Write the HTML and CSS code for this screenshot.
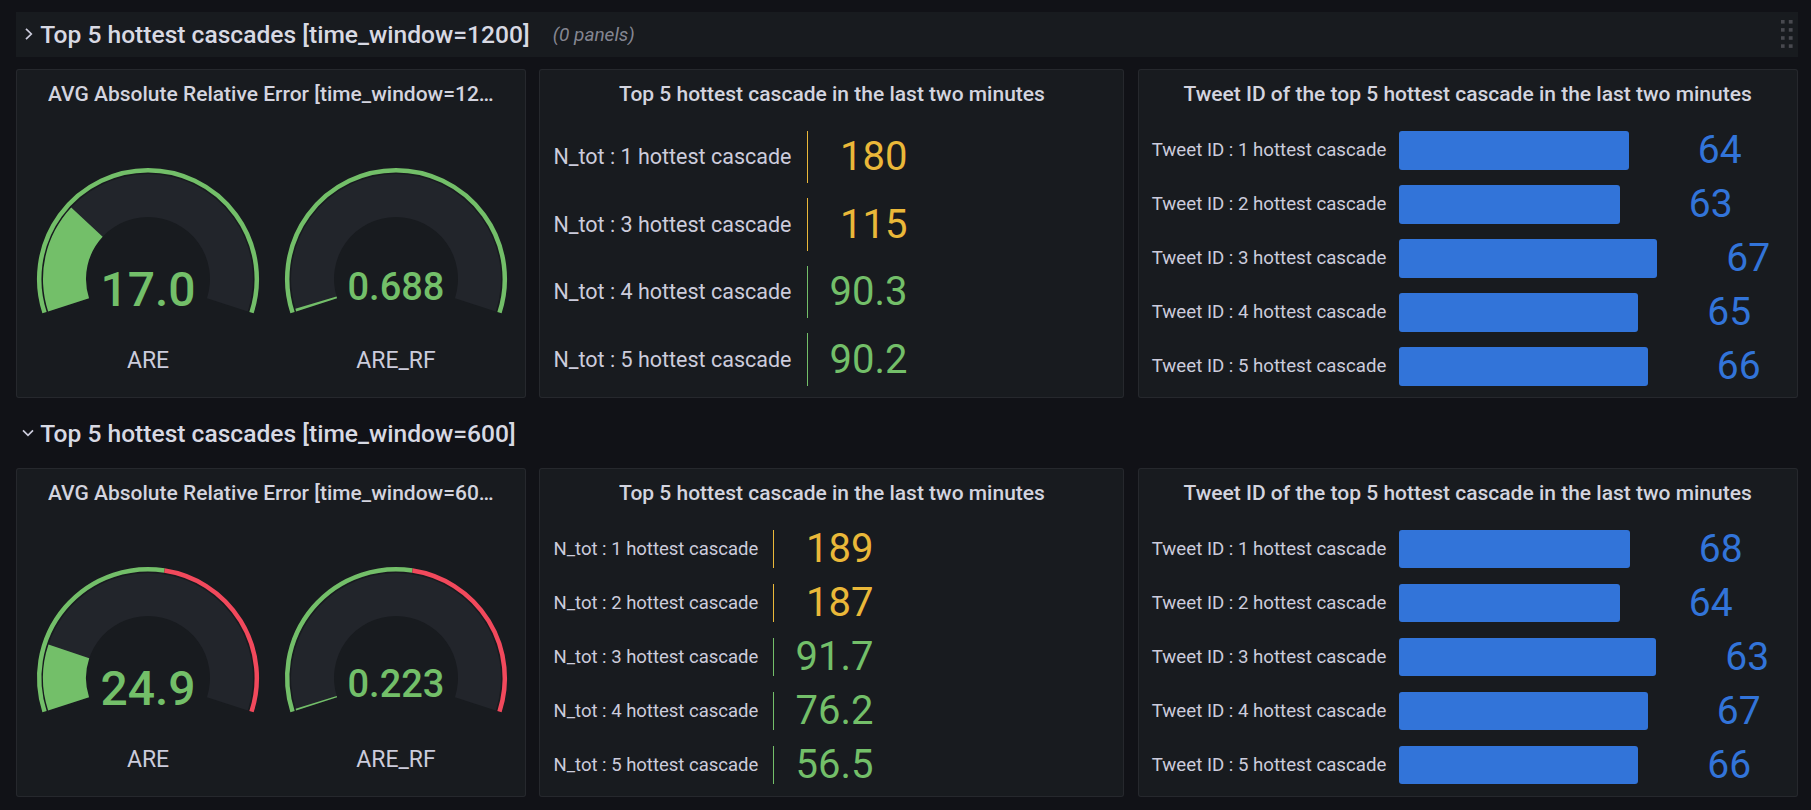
FILE: index.html
```html
<!DOCTYPE html>
<html>
<head>
<meta charset="utf-8">
<link rel="stylesheet" href="styles.css">
</head>
<body>
<div class="dashboard">

  <div class="row-header collapsed">
    <svg class="chev" width="14" height="14" viewBox="0 0 14 14"><polyline points="5,1.8 10.3,7 5,12.2" fill="none" stroke="#ccccdc" stroke-width="1.7"/></svg>
    <span class="row-title">Top 5 hottest cascades [time_window=1200]</span>
    <span class="row-count">(0 panels)</span>
    <svg class="drag" width="12" height="28" viewBox="0 0 12 28">
      <rect x="0" y="0" width="3.6" height="3.6"/><rect x="7.8" y="0" width="3.8" height="3.6"/>
      <rect x="0" y="8.1" width="3.6" height="3.6"/><rect x="7.8" y="8.1" width="3.8" height="3.6"/>
      <rect x="0" y="16.2" width="3.6" height="3.6"/><rect x="7.8" y="16.2" width="3.8" height="3.6"/>
      <rect x="0" y="24.3" width="3.6" height="3.6"/><rect x="7.8" y="24.3" width="3.8" height="3.6"/>
    </svg>
  </div>

  <div class="panel-grid">
    <section class="panel span7">
      <header class="panel-header"><span class="panel-title">AVG Absolute Relative Error [time_window=1200]</span></header>
      <div class="gauge-body">
        <div class="gauge-cell">
          <svg class="gauge" width="248" height="200" viewBox="0 0 248 200">
            <path class="band" d="M24.13 188.45 A105 105 0 1 1 223.87 188.45 L182.97 175.16 A62 62 0 1 0 65.03 175.16 Z"/>
            <path class="fill-green" d="M24.13 188.45 A105 105 0 0 1 47.21 84.39 L78.65 113.72 A62 62 0 0 0 65.03 175.16 Z"/>
            <path class="thr-green" d="M20.52 189.62 A108.8 108.8 0 1 1 227.48 189.62"/>
            <text class="gval big" x="124" y="183.4">17.0</text>
          </svg>
          <div class="gauge-label">ARE</div>
        </div>
        <div class="gauge-cell">
          <svg class="gauge" width="248" height="200" viewBox="0 0 248 200">
            <path class="band" d="M24.13 188.45 A105 105 0 1 1 223.87 188.45 L182.97 175.16 A62 62 0 1 0 65.03 175.16 Z"/>
            <path class="fill-green" d="M24.13 188.45 A105 105 0 0 1 23.33 185.82 L64.55 173.61 A62 62 0 0 0 65.03 175.16 Z"/>
            <path class="thr-green" d="M20.52 189.62 A108.8 108.8 0 1 1 227.48 189.62"/>
            <text class="gval small" x="124" y="176.5">0.688</text>
          </svg>
          <div class="gauge-label">ARE_RF</div>
        </div>
      </div>
    </section>

    <section class="panel span8">
      <header class="panel-header"><span class="panel-title">Top 5 hottest cascade in the last two minutes</span></header>
      <div class="list-body">
        <div class="stat-row four"><span class="stat-name">N_tot : 1 hottest cascade</span><span class="sep yellow-bg"></span><span class="stat-value yellow">180</span></div>
        <div class="stat-row four"><span class="stat-name">N_tot : 3 hottest cascade</span><span class="sep yellow-bg"></span><span class="stat-value yellow">115</span></div>
        <div class="stat-row four"><span class="stat-name">N_tot : 4 hottest cascade</span><span class="sep green-bg"></span><span class="stat-value green">90.3</span></div>
        <div class="stat-row four"><span class="stat-name">N_tot : 5 hottest cascade</span><span class="sep green-bg"></span><span class="stat-value green">90.2</span></div>
      </div>
    </section>

    <section class="panel span9">
      <header class="panel-header"><span class="panel-title">Tweet ID of the top 5 hottest cascade in the last two minutes</span></header>
      <div class="list-body">
        <div class="bar-row"><span class="bar-name">Tweet ID : 1 hottest cascade</span><span class="bar" style="width:230px"></span><span class="bar-value">64</span></div>
        <div class="bar-row"><span class="bar-name">Tweet ID : 2 hottest cascade</span><span class="bar" style="width:221px"></span><span class="bar-value">63</span></div>
        <div class="bar-row"><span class="bar-name">Tweet ID : 3 hottest cascade</span><span class="bar" style="width:258.5px"></span><span class="bar-value">67</span></div>
        <div class="bar-row"><span class="bar-name">Tweet ID : 4 hottest cascade</span><span class="bar" style="width:239.5px"></span><span class="bar-value">65</span></div>
        <div class="bar-row"><span class="bar-name">Tweet ID : 5 hottest cascade</span><span class="bar" style="width:249px"></span><span class="bar-value">66</span></div>
      </div>
    </section>
  </div>

  <div class="row-header">
    <svg class="chev" width="14" height="14" viewBox="0 0 14 14"><polyline points="2,4.3 7,9.4 12,4.3" fill="none" stroke="#ccccdc" stroke-width="1.7"/></svg>
    <span class="row-title">Top 5 hottest cascades [time_window=600]</span>
  </div>

  <div class="panel-grid">
    <section class="panel span7">
      <header class="panel-header"><span class="panel-title">AVG Absolute Relative Error [time_window=600]</span></header>
      <div class="gauge-body">
        <div class="gauge-cell">
          <svg class="gauge" width="248" height="200" viewBox="0 0 248 200">
            <path class="band" d="M24.13 188.45 A105 105 0 1 1 223.87 188.45 L182.97 175.16 A62 62 0 1 0 65.03 175.16 Z"/>
            <path class="fill-green" d="M24.13 188.45 A105 105 0 0 1 24.48 122.51 L65.24 136.22 A62 62 0 0 0 65.03 175.16 Z"/>
            <path class="thr-green" d="M20.52 189.62 A108.8 108.8 0 0 1 140.46 48.45"/>
            <path class="thr-red" d="M140.46 48.45 A108.8 108.8 0 0 1 227.48 189.62"/>
            <text class="gval big" x="124" y="183.4">24.9</text>
          </svg>
          <div class="gauge-label">ARE</div>
        </div>
        <div class="gauge-cell">
          <svg class="gauge" width="248" height="200" viewBox="0 0 248 200">
            <path class="band" d="M24.13 188.45 A105 105 0 1 1 223.87 188.45 L182.97 175.16 A62 62 0 1 0 65.03 175.16 Z"/>
            <path class="fill-green" d="M24.13 188.45 A105 105 0 0 1 23.6 186.7 L64.7 174.1 A62 62 0 0 0 65.03 175.16 Z"/>
            <path class="thr-green" d="M20.52 189.62 A108.8 108.8 0 0 1 140.46 48.45"/>
            <path class="thr-red" d="M140.46 48.45 A108.8 108.8 0 0 1 227.48 189.62"/>
            <text class="gval small" x="124" y="175">0.223</text>
          </svg>
          <div class="gauge-label">ARE_RF</div>
        </div>
      </div>
    </section>

    <section class="panel span8">
      <header class="panel-header"><span class="panel-title">Top 5 hottest cascade in the last two minutes</span></header>
      <div class="list-body">
        <div class="stat-row five"><span class="stat-name">N_tot : 1 hottest cascade</span><span class="sep yellow-bg"></span><span class="stat-value yellow">189</span></div>
        <div class="stat-row five"><span class="stat-name">N_tot : 2 hottest cascade</span><span class="sep yellow-bg"></span><span class="stat-value yellow">187</span></div>
        <div class="stat-row five"><span class="stat-name">N_tot : 3 hottest cascade</span><span class="sep green-bg"></span><span class="stat-value green">91.7</span></div>
        <div class="stat-row five"><span class="stat-name">N_tot : 4 hottest cascade</span><span class="sep green-bg"></span><span class="stat-value green">76.2</span></div>
        <div class="stat-row five"><span class="stat-name">N_tot : 5 hottest cascade</span><span class="sep green-bg"></span><span class="stat-value green">56.5</span></div>
      </div>
    </section>

    <section class="panel span9">
      <header class="panel-header"><span class="panel-title">Tweet ID of the top 5 hottest cascade in the last two minutes</span></header>
      <div class="list-body">
        <div class="bar-row"><span class="bar-name">Tweet ID : 1 hottest cascade</span><span class="bar" style="width:231px"></span><span class="bar-value">68</span></div>
        <div class="bar-row"><span class="bar-name">Tweet ID : 2 hottest cascade</span><span class="bar" style="width:221px"></span><span class="bar-value">64</span></div>
        <div class="bar-row"><span class="bar-name">Tweet ID : 3 hottest cascade</span><span class="bar" style="width:257.5px"></span><span class="bar-value">63</span></div>
        <div class="bar-row"><span class="bar-name">Tweet ID : 4 hottest cascade</span><span class="bar" style="width:249px"></span><span class="bar-value">67</span></div>
        <div class="bar-row"><span class="bar-name">Tweet ID : 5 hottest cascade</span><span class="bar" style="width:239.5px"></span><span class="bar-value">66</span></div>
      </div>
    </section>
  </div>

</div>
</body>
</html>
```
FILE: styles.css
```css
* { box-sizing: border-box; }

html, body {
  margin: 0;
  background: #111217;
  color: #ccccdc;
  font-family: Roboto, "Noto Sans", "Liberation Sans", sans-serif;
}

.dashboard {
  display: flex;
  flex-direction: column;
  gap: 12.6px;
  padding: 12px 13.5px 0 16px;
}

/* Row headers */
.row-header {
  height: 44.7px;
  flex: none;
  display: flex;
  align-items: center;
}
.row-header.collapsed { background: #181b1f; }

.chev {
  flex: none;
  margin-left: 5px;
}

.row-title {
  margin-left: 5.2px;
  font-size: 24.6px;
  font-weight: 500;
  color: #d8d9e3;
  white-space: nowrap;
}

.row-count {
  margin-left: 23px;
  font-size: 19px;
  font-style: italic;
  color: rgba(204, 204, 220, 0.62);
  white-space: nowrap;
}

.drag {
  margin-left: auto;
  margin-right: 5px;
  fill: #48494f;
}

/* Panels grid */
.panel-grid {
  display: grid;
  grid-template-columns: repeat(24, 1fr);
  grid-template-rows: 329px;
  column-gap: 13.3px;
  height: 329px;
  flex: none;
}
.span7 { grid-column: span 7; }
.span8 { grid-column: span 8; }
.span9 { grid-column: span 9; }

.panel {
  background: #181b1f;
  border: 1px solid rgba(204, 204, 220, 0.08);
  border-radius: 3px;
  display: flex;
  flex-direction: column;
  min-width: 0;
  min-height: 0;
  height: 329px;
}

.panel-header {
  height: 48px;
  flex: none;
  display: flex;
  align-items: center;
  justify-content: center;
  padding: 0 31px;
}

.panel-title {
  min-width: 0;
  font-size: 21px;
  font-weight: 500;
  color: #d3d4df;
  white-space: nowrap;
  overflow: hidden;
  text-overflow: ellipsis;
}

/* Gauge panel */
.gauge-body {
  flex: 1;
  min-height: 0;
  display: flex;
  padding: 5px 7px 0;
}
.gauge-cell {
  flex: 1;
  display: flex;
  flex-direction: column;
  align-items: center;
}
.gauge { display: block; overflow: visible; }
.band { fill: #22252b; }
.fill-green { fill: #73bf69; }
.thr-green { fill: none; stroke: #73bf69; stroke-width: 4.5; }
.thr-red { fill: none; stroke: #f2495c; stroke-width: 4.5; }
.gval {
  fill: #73bf69;
  font-family: Roboto, "Noto Sans", sans-serif;
  font-weight: 500;
  text-anchor: middle;
}
.gval.big { font-size: 48px; }
.gval.small { font-size: 38px; }

.gauge-label {
  margin-top: 24px;
  font-size: 23px;
  line-height: 27px;
  color: #ccccdc;
}

/* List panels (stat + bar gauge) */
.list-body {
  flex: 1;
  min-height: 0;
  display: flex;
  flex-direction: column;
  padding: 5px 14px 4px 13px;
}

.stat-row {
  flex: 1 1 0;
  min-height: 0;
  display: flex;
  align-items: center;
  padding: 7.7px 0;
}
.stat-name {
  white-space: nowrap;
  color: #ccccdc;
  line-height: 1.2;
}
.stat-row.four .stat-name { width: 238px; font-size: 21.5px; }
.stat-row.five .stat-name { width: 204px; font-size: 18.5px; }

.sep {
  align-self: stretch;
  width: 1px;
  margin-left: 16px;
}
.yellow-bg { background: #eab839; }
.green-bg { background: #73bf69; }

.stat-value {
  width: 99px;
  text-align: right;
  font-size: 40px;
  line-height: 30px;
}
.yellow { color: #eab839; }
.green { color: #73bf69; }

.bar-row {
  flex: 1 1 0;
  min-height: 0;
  display: flex;
  align-items: center;
  padding: 7.7px 0;
}
.bar-name {
  width: 247px;
  flex: none;
  white-space: nowrap;
  font-size: 18.67px;
  line-height: 1.2;
  color: #ccccdc;
}
.bar {
  align-self: stretch;
  flex: none;
  background: #3274d9;
  border-radius: 3px;
}
.bar-value {
  margin-left: 69px;
  font-size: 39px;
  line-height: 30px;
  color: #3274d9;
}
```
